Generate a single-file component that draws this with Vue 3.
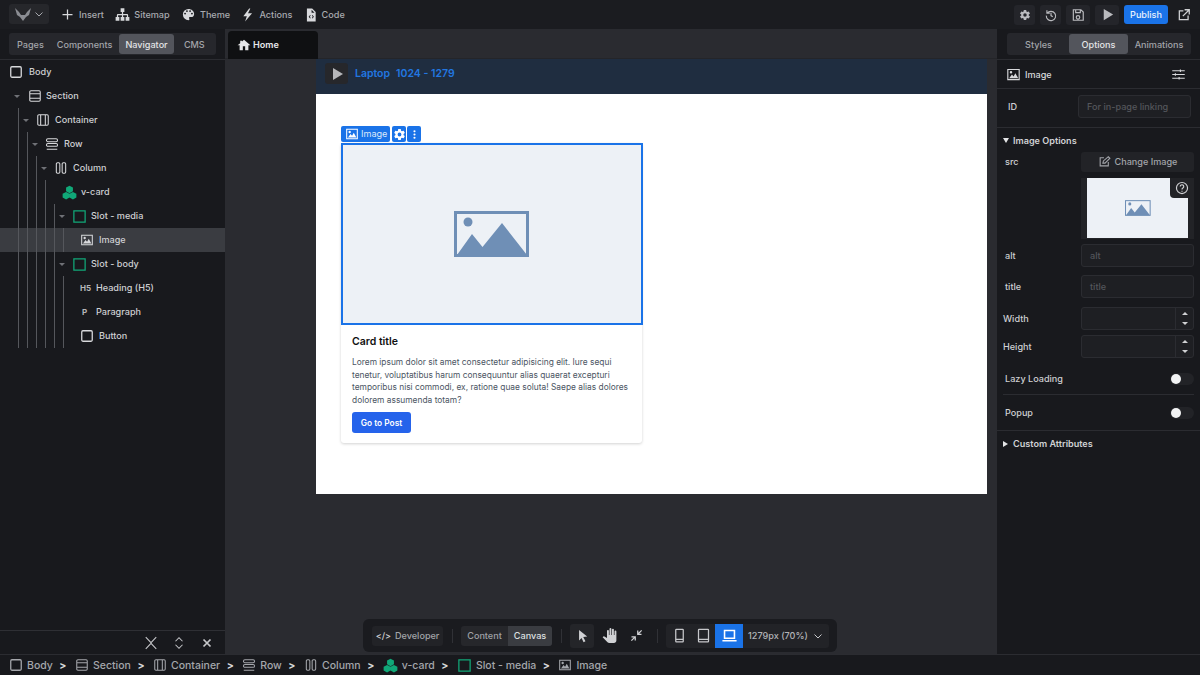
<template>
  <div class="app">
    <header class="topbar">
      <div class="logo">
        <svg width="16" height="13" viewBox="0 0 16 13"><path d="M0 0l4 4 2 3h4l2-3 4-4-2 7-3 2-3 4-3-4-3-2z" fill="#8b8d93" /></svg>
        <Icon name="chevron" :size="12" class="logo-caret" />
      </div>
      <div class="menu">
        <a v-for="m in menu" :key="m.label" class="menu-item">
          <Icon :name="m.icon" :size="m.size" />
          <span>{{ m.label }}</span>
        </a>
      </div>
      <div class="top-actions">
        <button class="top-btn"><Icon name="cog" :size="12" /></button>
        <button class="top-btn"><Icon name="history" :size="14" /></button>
        <button class="top-btn wide"><Icon name="save" :size="14" /></button>
        <button class="top-btn wide"><Icon name="play" :size="15" /></button>
        <button class="publish">Publish</button>
        <button class="top-btn bare"><Icon name="external" :size="14" /></button>
      </div>
    </header>

    <div class="main">
      <aside class="left">
        <div class="panel-head">
          <div class="tabs">
            <span v-for="t in leftTabs" :key="t" class="tab" :class="{ active: t === 'Navigator' }">{{ t }}</span>
          </div>
        </div>
        <div class="tree">
          <div
            v-for="row in tree"
            :key="row.label"
            class="tree-row"
            :class="{ selected: row.selected }"
          >
            <i v-for="g in row.guides" :key="g" class="guide" :style="{ left: g + 'px' }"></i>
            <span v-if="row.arrow" class="arrow" :style="{ left: row.arrow + 'px' }"></span>
            <span class="node-icon" :style="{ left: row.icon + 'px' }">
              <b v-if="row.tag" class="tag">{{ row.tag }}</b>
              <Icon v-else :name="row.glyph" :size="row.green ? 15 : 14" :class="{ green: row.green }" />
            </span>
            <span class="node-label" :style="{ paddingLeft: row.text + 'px' }">{{ row.label }}</span>
          </div>
        </div>
        <div class="tree-foot">
          <Icon name="collapseAll" :size="14" />
          <Icon name="expandAll" :size="14" />
          <Icon name="close" :size="14" />
        </div>
      </aside>

      <section class="center">
        <div class="doc-tabs">
          <div class="doc-tab"><Icon name="home" :size="14" /><span>Home</span></div>
        </div>
        <div class="stage">
          <div class="bp-bar">
            <span class="bp-play"><Icon name="play" :size="16" /></span>
            <span class="bp-name">Laptop</span>
            <span class="bp-range">1024 - 1279</span>
          </div>
          <div class="page">
            <article class="card">
              <div class="media">
                <div class="chips">
                  <span class="chip chip-label"><Icon name="image" :size="14" />Image</span>
                  <span class="chip chip-btn"><Icon name="cog" :size="13" /></span>
                  <span class="chip chip-btn"><Icon name="dots" :size="13" /></span>
                </div>
                <svg width="76" height="46" viewBox="0 0 76 46" class="placeholder">
                  <rect x="1.5" y="1.5" width="72" height="43" fill="none" stroke="#6f8fb6" stroke-width="3" />
                  <circle cx="14" cy="11" r="4.5" fill="#6f8fb6" />
                  <path d="M3 44l15-21 10.500 13L48 12l25 32z" fill="#6f8fb6" />
                </svg>
              </div>
              <div class="card-body">
                <h5>Card title</h5>
                <p>Lorem ipsum dolor sit amet consectetur adipisicing elit. Iure sequi tenetur, voluptatibus harum consequuntur alias quaerat excepturi temporibus nisi commodi, ex, ratione quae soluta! Saepe alias dolores dolorem assumenda totam?</p>
                <a class="post-btn">Go to Post</a>
              </div>
            </article>
          </div>
        </div>

        <div class="dock">
          <button class="dock-dev"><span class="code-mark">&lt;/&gt;</span>Developer</button>
          <i class="dock-sep"></i>
          <div class="seg">
            <span>Content</span>
            <span class="on">Canvas</span>
          </div>
          <i class="dock-sep"></i>
          <div class="dock-tools">
            <span class="tool on"><Icon name="cursor" :size="15" /></span>
            <span class="tool"><Icon name="hand" :size="15" /></span>
            <span class="tool"><Icon name="arrows" :size="15" /></span>
          </div>
          <i class="dock-sep"></i>
          <div class="devices">
            <span class="device"><Icon name="phone" :size="15" /></span>
            <span class="device"><Icon name="tablet" :size="15" /></span>
            <span class="device on"><Icon name="laptop" :size="17" /></span>
            <span class="size">1279px (70%)</span>
            <Icon name="chevron" :size="12" class="size-caret" />
          </div>
        </div>
      </section>

      <aside class="right">
        <div class="panel-head">
          <div class="tabs right-tabs">
            <span v-for="t in rightTabs" :key="t" class="tab" :class="{ active: t === 'Options' }">{{ t }}</span>
          </div>
        </div>
        <div class="el-head">
          <Icon name="image" :size="15" />
          <span>Image</span>
          <Icon name="sliders" :size="15" class="el-sliders" />
        </div>
        <div class="id-row">
          <label>ID</label>
          <div class="field id-field">For in-page linking</div>
        </div>
        <div class="section-title open"><i></i>Image Options</div>
        <div class="opts">
          <div class="opt src-row">
            <label>src</label>
            <button class="change"><Icon name="edit" :size="13" />Change Image</button>
          </div>
          <div class="preview">
            <div class="preview-img">
              <svg width="26" height="16" viewBox="0 0 76 46">
                <rect x="1.500" y="1.500" width="72" height="43" fill="none" stroke="#6f8fb6" stroke-width="3" />
                <circle cx="14" cy="11" r="4.500" fill="#6f8fb6" />
                <path d="M3 44l15-21 10.500 13L48 12l25 32z" fill="#6f8fb6" />
              </svg>
            </div>
            <span class="help"><Icon name="help" :size="14" /></span>
          </div>
          <div class="opt alt-row">
            <label>alt</label>
            <div class="field">alt</div>
          </div>
          <div class="opt title-row">
            <label>title</label>
            <div class="field">title</div>
          </div>
          <div v-for="n in ['Width', 'Height']" :key="n" class="opt num-row">
            <label>{{ n }}</label>
            <div class="field num">
              <div class="spin"><i class="up"></i><i class="down"></i></div>
            </div>
          </div>
        </div>
        <div class="toggle-row first">
          <span>Lazy Loading</span>
          <span class="switch"><i></i></span>
        </div>
        <div class="toggle-row">
          <span>Popup</span>
          <span class="switch"><i></i></span>
        </div>
        <div class="section-title closed"><i></i>Custom Attributes</div>
      </aside>
    </div>

    <footer class="crumbs">
      <template v-for="(c, i) in crumbs" :key="c.label">
        <span v-if="i" class="crumb-sep">&gt;</span>
        <span class="crumb">
          <Icon :name="c.icon" :size="c.green ? 15 : 14" :class="{ green: c.green }" />
          {{ c.label }}
        </span>
      </template>
    </footer>
  </div>
</template>

<script setup>
import { h } from 'vue'

const paths = {
  plus: { d: 'M12 4v16M4 12h16', line: 2 },
  chevron: { d: 'M5 9l7 7 7-7', line: 2 },
  close: { d: 'M6 6l12 12M18 6L6 18', line: 3 },
  collapseAll: { d: 'M3 2l9 9.500L21 2M3 22l9-9.500 9 9.500', line: 1.800 },
  expandAll: { d: 'M6 9l6-6 6 6M6 15l6 6 6-6', line: 1.800 },
  sitemap: { d: 'M9 2v6h2v3H5c-1.100 0-2 .9-2 2v3H1v6h6v-6H5v-3h6v3H9v6h6v-6h-2v-3h6v3h-2v6h6v-6h-2v-3c0-1.100-.9-2-2-2h-6V8h2V2z' },
  palette: { d: 'M17.500 12a1.500 1.500 0 1 1 0-3 1.500 1.500 0 0 1 0 3zm-3-4a1.500 1.500 0 1 1 0-3 1.500 1.500 0 0 1 0 3zm-5 0a1.500 1.500 0 1 1 0-3 1.500 1.500 0 0 1 0 3zm-3 4a1.500 1.500 0 1 1 0-3 1.500 1.500 0 0 1 0 3zM12 3a9 9 0 0 0 0 18 1.500 1.500 0 0 0 1.500-1.500c0-.39-.15-.74-.39-1-.23-.27-.38-.62-.38-1a1.500 1.500 0 0 1 1.500-1.500H16a5 5 0 0 0 5-5c0-4.420-4.030-8-9-8z' },
  bolt: { d: 'M14 1L4 14h6l-3 9 12-14h-7l4-8z' },
  file: { d: 'M5 1h9l6 6v16H5zM13 3v5h5zM10.500 12L8 15l2.500 3 1-1-1.600-2 1.600-2zM14.500 12l-1 1 1.600 2-1.600 2 1 1 2.500-3z' },
  cog: { d: 'M12 15.500a3.500 3.500 0 1 1 0-7 3.500 3.500 0 0 1 0 7zm7.430-2.530c.04-.32.07-.64.07-.97s-.03-.66-.07-1l2.110-1.630c.19-.15.24-.42.12-.64l-2-3.460c-.12-.22-.39-.31-.61-.22l-2.490 1c-.52-.39-1.060-.73-1.690-.98l-.37-2.650A.506.506 0 0 0 14 2h-4c-.25 0-.46.18-.5.42l-.37 2.650c-.63.25-1.170.59-1.690.98l-2.490-1c-.22-.09-.49 0-.61.22l-2 3.460c-.13.22-.07.49.12.64L4.570 11c-.04.34-.07.67-.07 1s.03.65.07.97l-2.110 1.660c-.19.15-.25.42-.12.64l2 3.460c.12.22.39.3.61.22l2.490-1.010c.52.4 1.060.74 1.690.99l.37 2.650c.04.24.25.42.5.42h4c.25 0 .46-.18.5-.42l.37-2.650c.63-.26 1.170-.59 1.690-.99l2.490 1.010c.22.08.49 0 .61-.22l2-3.460c.12-.22.07-.49-.12-.64z' },
  history: { d: 'M5 4v5h5M5.500 9A8 8 0 1 1 4 13M12 8v5l3 2', line: 2 },
  save: { d: 'M4 3h13l4 4v14H4zM8 3v5h8V3M9 16a3 3 0 1 0 6 0 3 3 0 1 0-6 0', line: 2 },
  play: { d: 'M6 3l15 9-15 9z' },
  external: { d: 'M11 5H4v15h15v-7M13 3h8v8M21 3L10 14', line: 2.200 },
  home: { d: 'M10 21v-7h4v7h5.500v-8.500H23L12 3 8.500 6.200V4.500h-3v4.400L1 12.500h3.500V21z' },
  image: { d: 'M2 3h20v18H2zm1.800 1.800v14.400h16.400V4.800zM5 18l4.500-6 2.600 3.200L15 10l4.500 8zM8 6.500a2 2 0 1 1 0 4 2 2 0 0 1 0-4z', rule: 'evenodd' },
  dots: { d: 'M12 4a2 2 0 1 1 0 4 2 2 0 0 1 0-4zm0 6a2 2 0 1 1 0 4 2 2 0 0 1 0-4zm0 6a2 2 0 1 1 0 4 2 2 0 0 1 0-4z' },
  sliders: { d: 'M2 6h20M2 12h20M2 18h20M15 4v4M7 10v4M13 16v4', line: 1.800 },
  edit: { d: 'M19 13v7H4V5h7M9 15l1-4 9-8 3 3-9 9z', line: 2 },
  help: { d: 'M12 2.500a9.500 9.500 0 1 0 0 19 9.500 9.500 0 0 0 0-19zM9 9.500a3 3 0 1 1 4.500 2.600c-1 .6-1.500 1.200-1.500 2.400M12 16.500v1.800', line: 2 },
  cursor: { d: 'M6.500 3l13 10.500-6.300 1 3.500 6.700-3 1.500-3.200-6.900L6.500 20z' },
  hand: { d: 'M23 5.500V20c0 2.200-1.800 4-4 4h-7.300c-1.100 0-2.100-.4-2.900-1.200L1 14.800l1.300-1.200c.2-.2.500-.3.8-.3.2 0 .4.1.6.2L8 16V4.500a1.500 1.500 0 0 1 3 0V11h1V1.500a1.500 1.500 0 0 1 3 0V11h1V2.500a1.500 1.500 0 0 1 3 0V11h1V5.500a1.500 1.500 0 0 1 3 0z' },
  arrows: { d: 'M19.500 3.090L15 7.590V4h-2v7h7V9h-3.590l4.500-4.500zM4 13v2h3.590l-4.500 4.500 1.410 1.410L9 16.410V20h2v-7z' },
  phone: { d: 'M7 2h10a1 1 0 0 1 1 1v18a1 1 0 0 1-1 1H7a1 1 0 0 1-1-1V3a1 1 0 0 1 1-1zM6 18h12', line: 2 },
  tablet: { d: 'M5 2h14a1 1 0 0 1 1 1v18a1 1 0 0 1-1 1H5a1 1 0 0 1-1-1V3a1 1 0 0 1 1-1zM4 18h16', line: 2 },
  laptop: { d: 'M5 5h14v11H5zM2 19.500h20', line: 2.200 },
  body: { d: 'M5 3h14a2 2 0 0 1 2 2v14a2 2 0 0 1-2 2H5a2 2 0 0 1-2-2V5a2 2 0 0 1 2-2z', line: 2.200 },
  section: { d: 'M5 3h14a2 2 0 0 1 2 2v14a2 2 0 0 1-2 2H5a2 2 0 0 1-2-2V5a2 2 0 0 1 2-2zM3 8h18M3 16h18', line: 1.800 },
  container: { d: 'M5 3h14a2 2 0 0 1 2 2v14a2 2 0 0 1-2 2H5a2 2 0 0 1-2-2V5a2 2 0 0 1 2-2zM8 3v18M16 3v18', line: 1.800 },
  row: { d: 'M5 3h14a2.500 2.500 0 0 1 0 5H5a2.500 2.500 0 0 1 0-5zM5 11h14a2.500 2.500 0 0 1 0 5H5a2.500 2.500 0 0 1 0-5zM3 21h18', line: 1.800 },
  column: { d: 'M6 3h2a2 2 0 0 1 2 2v14a2 2 0 0 1-2 2H6a2 2 0 0 1-2-2V5a2 2 0 0 1 2-2zM16 3h2a2 2 0 0 1 2 2v14a2 2 0 0 1-2 2h-2a2 2 0 0 1-2-2V5a2 2 0 0 1 2-2z', line: 1.800 },
  slot: { d: 'M3 3h18v18H3z', line: 2 },
  cubes: { d: 'M12 1l5.500 3v6L12 13 6.500 10V4zM6.500 11L12 14v6l-5.500 3L1 20v-6zM17.500 11L23 14v6l-5.500 3L12 20v-6z' },
}

const Icon = ({ name, size }) => {
  const p = paths[name]
  return h('svg', { width: size, height: size, viewBox: '0 0 24 24', class: 'ico' }, [
    h('path', p.line
      ? { d: p.d, fill: 'none', stroke: 'currentColor', 'stroke-width': p.line }
      : { d: p.d, fill: 'currentColor', 'fill-rule': p.rule || 'nonzero' }),
  ])
}

const menu = [
  { label: 'Insert', icon: 'plus', size: 15 },
  { label: 'Sitemap', icon: 'sitemap', size: 15 },
  { label: 'Theme', icon: 'palette', size: 15 },
  { label: 'Actions', icon: 'bolt', size: 14 },
  { label: 'Code', icon: 'file', size: 14 },
]

const leftTabs = ['Pages', 'Components', 'Navigator', 'CMS']
const rightTabs = ['Styles', 'Options', 'Animations']

const stops = [18, 27, 36, 45, 54, 63]
const upto = (n) => stops.slice(0, n)

const tree = [
  { label: 'Body', glyph: 'body', icon: 9, text: 29, guides: [] },
  { label: 'Section', glyph: 'section', arrow: 14, icon: 28, text: 46, guides: [] },
  { label: 'Container', glyph: 'container', arrow: 23, icon: 36, text: 55, guides: upto(1) },
  { label: 'Row', glyph: 'row', arrow: 32, icon: 45, text: 64, guides: upto(2) },
  { label: 'Column', glyph: 'column', arrow: 41, icon: 54, text: 73, guides: upto(3) },
  { label: 'v-card', glyph: 'cubes', green: true, icon: 62, text: 81, guides: upto(4) },
  { label: 'Slot - media', glyph: 'slot', green: true, arrow: 59, icon: 72, text: 91, guides: upto(5) },
  { label: 'Image', glyph: 'image', icon: 80, text: 99, guides: upto(6), selected: true },
  { label: 'Slot - body', glyph: 'slot', green: true, arrow: 59, icon: 72, text: 91, guides: upto(5) },
  { label: 'Heading (H5)', tag: 'H5', icon: 80, text: 96, guides: upto(6) },
  { label: 'Paragraph', tag: 'P', icon: 82, text: 96, guides: upto(6) },
  { label: 'Button', glyph: 'body', icon: 80, text: 99, guides: upto(6) },
]

const crumbs = [
  { label: 'Body', icon: 'body' },
  { label: 'Section', icon: 'section' },
  { label: 'Container', icon: 'container' },
  { label: 'Row', icon: 'row' },
  { label: 'Column', icon: 'column' },
  { label: 'v-card', icon: 'cubes', green: true },
  { label: 'Slot - media', icon: 'slot', green: true },
  { label: 'Image', icon: 'image' },
]
</script>

<style>
html,
body {
  margin: 0;
  background: #18191d;
}
</style>

<style scoped>
* {
  box-sizing: border-box;
}

.app {
  width: 1200px;
  height: 675px;
  overflow: hidden;
  display: flex;
  flex-direction: column;
  background: #18191d;
  color: #d4d5d8;
  font-family: Inter, "Noto Sans", sans-serif;
  font-size: 9.100px;
  font-weight: 500;
}

button {
  font: inherit;
  border: 0;
}

.ico {
  display: block;
  flex-shrink: 0;
}

.green {
  color: #10a878;
}

/* top bar */
.topbar {
  height: 29px;
  flex-shrink: 0;
  display: flex;
  align-items: center;
  padding: 0 6px 0 9px;
  background: #1b1c20;
}

.logo {
  width: 40px;
  height: 20px;
  margin-bottom: 1px;
  display: flex;
  align-items: center;
  gap: 2px;
  padding-left: 6px;
  background: #26272b;
  border-radius: 3px;
  color: #a5a7ac;
}

.menu {
  display: flex;
  align-items: center;
  margin-left: 11px;
  gap: 11.300px;
}

.menu-item {
  display: flex;
  align-items: center;
  gap: 4px;
  color: #a9abb0;
}

.menu-item .ico {
  color: #d8d9dc;
}

.top-actions {
  margin-left: auto;
  display: flex;
  align-items: center;
  gap: 5px;
}

.top-btn {
  width: 21px;
  height: 20px;
  display: flex;
  align-items: center;
  justify-content: center;
  background: #24252a;
  border-radius: 3px;
  color: #b9babe;
}

.top-btn.wide {
  width: 24px;
}

.top-btn.bare {
  background: none;
  color: #cfd0d3;
}

.publish {
  width: 44px;
  height: 19px;
  background: #1a73e8;
  color: #e8f1fd;
  border-radius: 3px;
  padding: 0;
}

.main {
  flex: 1;
  min-height: 0;
  display: flex;
}

/* shared tabs */
.panel-head {
  height: 31px;
  flex-shrink: 0;
  padding-top: 4px;
  border-bottom: 1px solid #2b2c31;
}

.tabs {
  margin-left: 9px;
  width: 207px;
  height: 22px;
  display: flex;
  align-items: center;
  gap: 1px;
  padding: 0 2px;
  background: #26272c;
  border-radius: 3px;
  color: #a3a5aa;
}

.tab {
  height: 20px;
  display: flex;
  align-items: center;
  justify-content: center;
  padding: 0 6px;
  border-radius: 3px;
  white-space: nowrap;
}

.tab:last-child {
  flex: 1;
}

.tab.active {
  background: #53555c;
  color: #e4e5e7;
}

/* left tree */
.left {
  width: 225px;
  flex-shrink: 0;
  display: flex;
  flex-direction: column;
  background: #18191d;
}

.tree {
  flex: 1;
  min-height: 0;
}

.tree-row {
  position: relative;
  height: 24px;
  display: flex;
  align-items: center;
  color: #cfd0d3;
}

.tree-row.selected {
  background: #3a3c41;
}

.node-label {
  padding-bottom: 1px;
}

.guide {
  position: absolute;
  top: 0;
  bottom: 0;
  width: 1px;
  background: #55575c;
}

.arrow {
  position: absolute;
  top: 11px;
  border-left: 3px solid transparent;
  border-right: 3px solid transparent;
  border-top: 3.500px solid #6f7176;
}

.node-icon {
  position: absolute;
  top: 5px;
  color: #d8d9dc;
}

.tag {
  display: block;
  font-size: 8px;
  line-height: 14px;
  font-weight: 700;
  color: #b5b6ba;
}

.tree-foot {
  height: 24px;
  flex-shrink: 0;
  display: flex;
  align-items: center;
  justify-content: flex-end;
  gap: 14px;
  padding-right: 11px;
  border-top: 1px solid #2e2f34;
  color: #c6c7ca;
}

/* canvas */
.center {
  flex: 1;
  min-width: 0;
  position: relative;
  display: flex;
  flex-direction: column;
  background: #2a2b30;
}

.doc-tabs {
  height: 30px;
  flex-shrink: 0;
  padding: 2px 0 0 3px;
  border-bottom: 1px solid #242529;
}

.doc-tab {
  width: 90px;
  height: 28px;
  display: flex;
  align-items: center;
  gap: 2px;
  padding: 0 0 1px 9px;
  background: #0f1012;
  border-radius: 4px 4px 0 0;
  color: #e6e7e9;
  font-weight: 600;
}

.stage {
  padding: 0 10px 0 91px;
}

.bp-bar {
  height: 35px;
  display: flex;
  align-items: flex-start;
  padding: 4px 0 0 9px;
  background: #1f2d40;
  color: #2277e0;
  font-size: 10.500px;
  line-height: 21px;
  font-weight: 600;
}

.bp-play {
  width: 23px;
  height: 21px;
  display: flex;
  align-items: center;
  justify-content: center;
  margin-right: 7px;
  background: #26272b;
  border-radius: 3px;
  color: #b5b6ba;
}

.bp-range {
  margin-left: 6px;
}

.page {
  height: 400px;
  padding: 49px 0 0 25px;
  background: #fff;
}

.card {
  width: 301px;
  height: 300px;
  border-radius: 3px;
  background: #fff;
  box-shadow: 0 1px 3px rgba(0, 0, 0, 0.18);
}

.media {
  position: relative;
  width: 302px;
  height: 182px;
  display: flex;
  align-items: center;
  justify-content: center;
  background: #edf1f6;
  border: 2px solid #1a73e8;
}

.chips {
  position: absolute;
  left: -2px;
  top: -19px;
  height: 16px;
  display: flex;
  gap: 1px;
  color: #fff;
}

.chip {
  display: flex;
  align-items: center;
  background: #1a73e8;
  border-radius: 2px;
}

.chip-label {
  gap: 2px;
  padding: 0 3px 1px 4px;
  font-size: 9.100px;
  font-weight: 400;
  color: #dbe9fb;
}

.chip-label .ico {
  color: #fff;
}

.chip-btn {
  width: 14px;
  justify-content: center;
}

.chip-label + .chip-btn {
  margin-left: 1px;
}

.card-body {
  padding: 9px 11px 8px;
  color: #4b5563;
}

h5 {
  margin: 0;
  font-size: 10.500px;
  line-height: 16px;
  font-weight: 600;
  color: #111;
}

p {
  margin: 6px 0 0;
  font-size: 8.400px;
  line-height: 12.600px;
  font-weight: 400;
}

.post-btn {
  width: 59px;
  height: 21px;
  margin-top: 6px;
  display: flex;
  align-items: center;
  justify-content: center;
  background: #2563eb;
  border-radius: 3px;
  color: #fff;
  font-size: 8.400px;
  font-weight: 600;
}

/* floating dock */
.dock {
  position: absolute;
  left: 138px;
  top: 590px;
  width: 474px;
  height: 33px;
  display: flex;
  align-items: center;
  padding: 0 9px;
  background: #1a1b1f;
  border-radius: 6px;
  color: #9fa1a6;
}

.dock-dev {
  width: 71px;
  height: 20px;
  flex-shrink: 0;
  display: flex;
  align-items: center;
  justify-content: center;
  gap: 4px;
  padding: 0;
  background: #222327;
  border-radius: 3px;
  color: #a1a3a8;
}

.code-mark {
  font-size: 9px;
  color: #d0d1d4;
}

.dock-sep {
  width: 1px;
  height: 14px;
  flex-shrink: 0;
  margin: 0 8.500px;
  background: #303136;
}

.seg {
  display: flex;
  height: 20px;
  flex-shrink: 0;
  background: #26272b;
  border-radius: 3px;
}

.seg span {
  width: 44px;
  display: flex;
  align-items: center;
  justify-content: center;
}

.seg span:first-child {
  width: 47px;
}

.seg .on {
  background: #3a3c41;
  border-radius: 0 3px 3px 0;
  color: #dfe0e2;
}

.dock-tools {
  display: flex;
  align-items: center;
  flex-shrink: 0;
  gap: 3px;
  color: #d0d1d4;
}

.tool {
  width: 24px;
  height: 24px;
  display: flex;
  align-items: center;
  justify-content: center;
  border-radius: 3px;
}

.tool.on {
  background: #242529;
}

.devices {
  height: 24px;
  flex-shrink: 0;
  display: flex;
  align-items: center;
  padding-left: 1px;
  background: #222327;
  border-radius: 3px;
  color: #c7c8cb;
}

.device {
  width: 24px;
  height: 24px;
  display: flex;
  align-items: center;
  justify-content: center;
}

.device.on {
  width: 28px;
  background: #1a73e8;
  color: #fff;
}

.size {
  margin-left: 5px;
  white-space: nowrap;
  color: #b2b4b8;
}

.size-caret {
  margin: 0 5px 0 4px;
}

/* right options */
.right {
  width: 203px;
  flex-shrink: 0;
  display: flex;
  flex-direction: column;
  background: #18191d;
}

.right-tabs {
  margin-left: 10px;
  width: 184px;
  gap: 0;
  padding: 0 1px;
}

.right-tabs .tab {
  width: 61px;
  padding: 0;
}

.right-tabs .tab.active {
  width: 59px;
}

.el-head {
  height: 29px;
  flex-shrink: 0;
  display: flex;
  align-items: center;
  gap: 4px;
  padding: 0 14px 0 9px;
  border-bottom: 1px solid #2b2c31;
  color: #d8d9dc;
}

.el-sliders {
  margin-left: auto;
}

.id-row {
  height: 39px;
  flex-shrink: 0;
  display: flex;
  align-items: center;
  padding: 0 9px 4px 11px;
  border-bottom: 1px solid #2b2c31;
  color: #cfd0d3;
}

.id-row label {
  width: 70px;
}

.field {
  width: 113px;
  height: 23px;
  display: flex;
  align-items: center;
  padding-left: 8px;
  background: #1e1f23;
  border: 1px solid #2b2c31;
  border-radius: 3px;
  color: #54565b;
}

.section-title {
  height: 24px;
  flex-shrink: 0;
  display: flex;
  align-items: center;
  gap: 5px;
  padding-left: 6px;
  color: #d0d1d4;
  font-weight: 600;
}

.section-title i {
  display: block;
}

.open {
  gap: 4px;
}

.open i {
  border-left: 3px solid transparent;
  border-right: 3px solid transparent;
  border-top: 5px solid #e4e5e7;
}

.closed i {
  border-top: 3px solid transparent;
  border-bottom: 3px solid transparent;
  border-left: 5px solid #e4e5e7;
}

.closed {
  height: 26px;
  border-top: 1px solid #2b2c31;
}

.opts {
  padding: 0 6px 0 8px;
  flex-shrink: 0;
}

.opt {
  display: flex;
  align-items: center;
  justify-content: space-between;
  color: #cfd0d3;
}

.src-row {
  height: 20px;
}

.src-row label {
  padding-bottom: 2px;
}

.change {
  width: 113px;
  height: 20px;
  display: flex;
  align-items: center;
  justify-content: center;
  gap: 4px;
  padding: 0 0 1px;
  background: #222327;
  border-radius: 3px;
  color: #a3a5aa;
}

.preview {
  position: relative;
  margin: 6px 0 5px 76px;
  width: 113px;
  height: 61px;
  padding-left: 6px;
  background: #222327;
}

.preview-img {
  width: 101px;
  height: 60px;
  display: flex;
  align-items: center;
  justify-content: center;
  background: #edf1f6;
}

.help {
  position: absolute;
  right: 0;
  top: 0;
  width: 24px;
  height: 20px;
  display: flex;
  align-items: center;
  justify-content: center;
  background: #222327;
  border-radius: 0 0 0 4px;
  color: #d0d1d4;
}

.alt-row,
.title-row {
  height: 23px;
  margin-bottom: 8px;
}

.title-row {
  margin-bottom: 9px;
}

.num-row {
  height: 23px;
  margin-bottom: 5px;
}

.num-row:last-child {
  margin-bottom: 0;
}

.num-row label {
  margin-left: -2px;
}

.num {
  padding: 0;
  justify-content: flex-end;
}

.spin {
  width: 18px;
  height: 100%;
  display: flex;
  flex-direction: column;
  border-left: 1px solid #2b2c31;
}

.spin i {
  flex: 1;
  display: flex;
  align-items: center;
  justify-content: center;
}

.spin i::after {
  content: '';
  border-left: 3px solid transparent;
  border-right: 3px solid transparent;
}

.spin .up::after {
  border-bottom: 3px solid #d0d1d4;
}

.spin .down::after {
  border-top: 3px solid #d0d1d4;
}

.toggle-row {
  height: 35px;
  margin: 0 6px;
  padding: 0 0 0 2px;
  flex-shrink: 0;
  display: flex;
  align-items: center;
  justify-content: space-between;
  color: #cfd0d3;
}

.toggle-row.first {
  margin-top: 5px;
  height: 32px;
  border-bottom: 1px solid #2b2c31;
}

.switch {
  width: 24px;
  height: 12px;
  border-radius: 6px;
  background: #222327;
  display: flex;
  align-items: center;
}

.switch i {
  width: 10px;
  height: 10px;
  margin-left: 1px;
  border-radius: 50%;
  background: #f2f3f4;
}

/* breadcrumb */
.crumbs {
  height: 21px;
  flex-shrink: 0;
  display: flex;
  align-items: center;
  padding-left: 9px;
  background: #18191d;
  border-top: 1px solid #2b2c31;
  color: #a5a7ac;
  font-size: 10.500px;
}

.crumb {
  display: flex;
  align-items: center;
  gap: 4px;
}

.crumb-sep {
  margin: 0 8.500px 0 6.500px;
  color: #d8d9dc;
  font-weight: 700;
}
</style>
